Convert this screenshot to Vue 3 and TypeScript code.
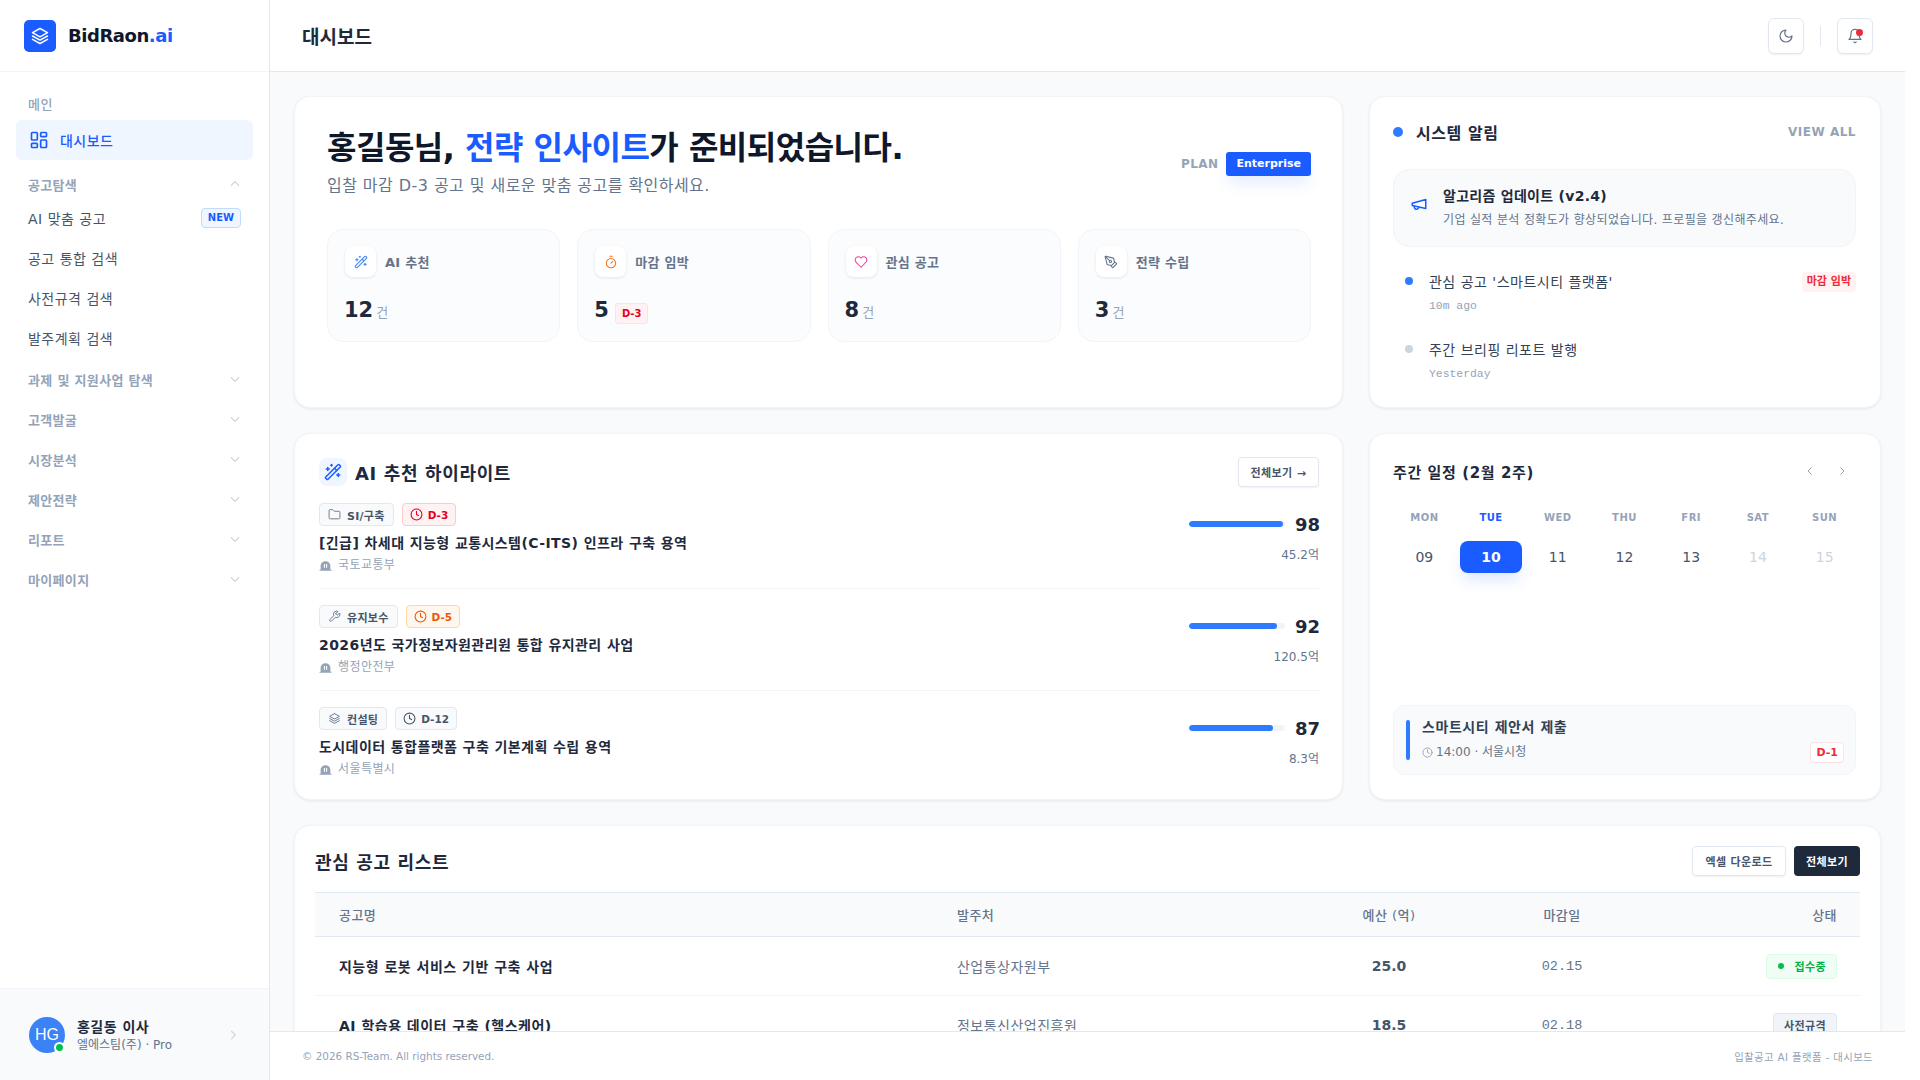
<script setup lang="ts">
const groups = ['과제 및 지원사업 탐색', '고객발굴', '시장분석', '제안전략', '리포트', '마이페이지']
const subs = ['공고 통합 검색', '사전규격 검색', '발주계획 검색']
const stats = [
  { key: 'wand', label: 'AI 추천', value: '12', color: '#3b82f6' },
  { key: 'clock', label: '마감 임박', value: '5', color: '#f97316', badge: 'D-3' },
  { key: 'heart', label: '관심 공고', value: '8', color: '#ec4899' },
  { key: 'pen', label: '전략 수립', value: '3', color: '#64748b' },
]
const recs = [
  { icon: 'folder', cat: 'SI/구축', d: 'D-3', tone: 'red', title: '[긴급] 차세대 지능형 교통시스템(C-ITS) 인프라 구축 용역', org: '국토교통부', score: 98, money: '45.2억' },
  { icon: 'wrench', cat: '유지보수', d: 'D-5', tone: 'orange', title: '2026년도 국가정보자원관리원 통합 유지관리 사업', org: '행정안전부', score: 92, money: '120.5억' },
  { icon: 'layers', cat: '컨설팅', d: 'D-12', tone: 'gray', title: '도시데이터 통합플랫폼 구축 기본계획 수립 용역', org: '서울특별시', score: 87, money: '8.3억' },
]
const days = [
  { n: 'MON', d: '09' }, { n: 'TUE', d: '10', on: true }, { n: 'WED', d: '11' }, { n: 'THU', d: '12' },
  { n: 'FRI', d: '13' }, { n: 'SAT', d: '14', off: true }, { n: 'SUN', d: '15', off: true },
]
</script>

<template>
  <div class="app">
    <aside class="side">
      <div class="brand">
        <span class="logo">
          <svg viewBox="0 0 24 24" width="20" height="20" fill="none" stroke="#fff" stroke-width="1.8" stroke-linejoin="round" stroke-linecap="round"><path d="M12 3 3 8l9 5 9-5-9-5Z"/><path d="m3 12 9 5 9-5"/><path d="m3 16 9 5 9-5"/></svg>
        </span>
        <span class="brand-name">BidRaon<em>.ai</em></span>
      </div>
      <nav class="nav">
        <div class="nav-label">메인</div>
        <a class="nav-active">
          <svg viewBox="0 0 24 24" width="20" height="20" fill="none" stroke="currentColor" stroke-width="2"><rect x="3" y="3" width="7" height="9" rx="1"/><rect x="14" y="3" width="7" height="5" rx="1"/><rect x="14" y="12" width="7" height="9" rx="1"/><rect x="3" y="16" width="7" height="5" rx="1"/></svg>
          <span>대시보드</span>
        </a>
        <div class="group open">
          <span>공고탐색</span>
          <svg viewBox="0 0 24 24" width="14" height="14" fill="none" stroke="#cbd5e1" stroke-width="2"><path d="m5 15 7-7 7 7"/></svg>
        </div>
        <div class="subs">
          <a class="sub"><span>AI 맞춤 공고</span><b class="new">NEW</b></a>
          <a v-for="s in subs" :key="s" class="sub"><span>{{ s }}</span></a>
        </div>
        <div v-for="g in groups" :key="g" class="group">
          <span>{{ g }}</span>
          <svg viewBox="0 0 24 24" width="14" height="14" fill="none" stroke="#cbd5e1" stroke-width="2"><path d="m5 9 7 7 7-7"/></svg>
        </div>
      </nav>
      <div class="user">
        <span class="avatar">HG<i></i></span>
        <span class="user-text"><b>홍길동 이사</b><small>엘에스팀(주) · Pro</small></span>
        <svg viewBox="0 0 24 24" width="14" height="14" fill="none" stroke="#cbd5e1" stroke-width="2"><path d="m9 5 7 7-7 7"/></svg>
      </div>
    </aside>

    <div class="main">
      <header class="top">
        <h1>대시보드</h1>
        <div class="top-actions">
          <button class="icon-btn">
            <svg viewBox="0 0 24 24" width="16" height="16" fill="none" stroke="#64748b" stroke-width="1.8" stroke-linecap="round" stroke-linejoin="round"><path d="M12 3a6 6 0 0 0 9 9 9 9 0 1 1-9-9Z"/></svg>
          </button>
          <span class="vline"></span>
          <button class="icon-btn">
            <svg viewBox="0 0 24 24" width="16" height="16" fill="none" stroke="#64748b" stroke-width="1.8" stroke-linecap="round" stroke-linejoin="round"><path d="M6 8a6 6 0 0 1 12 0c0 7 3 9 3 9H3s3-2 3-9"/><path d="M10.3 21a2 2 0 0 0 3.4 0"/></svg>
            <i class="bell-dot"></i>
          </button>
        </div>
      </header>

      <div class="content">
        <div class="grid">
          <section class="card hero">
            <div class="hero-top">
              <div>
                <h2>홍길동님, <em>전략 인사이트</em>가 준비되었습니다.</h2>
                <p>입찰 마감 D-3 공고 및 새로운 맞춤 공고를 확인하세요.</p>
              </div>
              <div class="plan"><span>PLAN</span><b>Enterprise</b></div>
            </div>
            <div class="stats">
              <div v-for="s in stats" :key="s.key" class="stat">
                <div class="stat-head">
                  <span class="stat-icon">
                    <svg viewBox="0 0 24 24" width="14" height="14" fill="none" :stroke="s.color" stroke-width="1.8" stroke-linecap="round" stroke-linejoin="round">
                      <template v-if="s.key === 'wand'"><path d="m21.64 3.64-1.28-1.28a1.21 1.21 0 0 0-1.72 0L2.360 18.640a1.21 1.21 0 0 0 0 1.720l1.280 1.280a1.200 1.200 0 0 0 1.720 0L21.640 5.360a1.200 1.200 0 0 0 0-1.720"/><path d="m14 7 3 3"/><path d="M5 6v4M19 14v4M10 2v2M7 8H3M21 16h-4M11 3H9"/></template>
                      <template v-else-if="s.key === 'clock'"><path d="M10 2h4"/><path d="m12 14 3-3"/><circle cx="12" cy="14" r="8"/></template>
                      <path v-else-if="s.key === 'heart'" d="M19 14c1.490-1.460 3-3.210 3-5.500A5.500 5.500 0 0 0 16.500 3c-1.760 0-3 .5-4.500 2-1.500-1.500-2.740-2-4.500-2A5.500 5.500 0 0 0 2 8.500c0 2.300 1.500 4.050 3 5.500l7 7Z"/>
                      <template v-else><path d="M15.707 21.293a1 1 0 0 1-1.414 0l-1.586-1.586a1 1 0 0 1 0-1.414l5.586-5.586a1 1 0 0 1 1.414 0l1.586 1.586a1 1 0 0 1 0 1.414z"/><path d="m18 13-1.375-6.874a1 1 0 0 0-.746-.776L3.235 2.028a1 1 0 0 0-1.207 1.207L5.350 15.879a1 1 0 0 0 .776.746L13 18"/><path d="m2.300 2.300 7.286 7.286"/><circle cx="11" cy="11" r="2"/></template>
                    </svg>
                  </span>
                  <span>{{ s.label }}</span>
                </div>
                <div class="stat-val">
                  <strong>{{ s.value }}</strong>
                  <b v-if="s.badge" class="d-badge">{{ s.badge }}</b>
                  <small v-else>건</small>
                </div>
              </div>
            </div>
          </section>

          <section class="card alerts">
            <div class="alerts-head">
              <h3><i class="blue-dot"></i>시스템 알림</h3>
              <a>VIEW ALL</a>
            </div>
            <div class="notice">
              <svg viewBox="0 0 24 24" width="18" height="18" fill="none" stroke="#1a5cff" stroke-width="2" stroke-linecap="round" stroke-linejoin="round"><path d="m3 11 18-5v12L3 14v-3z"/><path d="M11.600 16.800a3 3 0 1 1-5.800-1.600"/></svg>
              <div>
                <b>알고리즘 업데이트 (v2.4)</b>
                <p>기업 실적 분석 정확도가 향상되었습니다. 프로필을 갱신해주세요.</p>
              </div>
            </div>
            <div class="alert-row">
              <i class="adot"></i>
              <div class="alert-text"><span>관심 공고 '스마트시티 플랫폼'</span><code>10m ago</code></div>
              <b class="urgent">마감 임박</b>
            </div>
            <div class="alert-row">
              <i class="adot muted"></i>
              <div class="alert-text"><span>주간 브리핑 리포트 발행</span><code>Yesterday</code></div>
            </div>
          </section>

          <section class="card recs">
            <div class="recs-head">
              <h3>
                <span class="wand-box">
                  <svg viewBox="0 0 24 24" width="18" height="18" fill="none" stroke="#1a5cff" stroke-width="2" stroke-linecap="round" stroke-linejoin="round"><path d="m21.64 3.64-1.28-1.28a1.21 1.21 0 0 0-1.72 0L2.360 18.640a1.21 1.21 0 0 0 0 1.720l1.280 1.280a1.200 1.200 0 0 0 1.720 0L21.640 5.360a1.200 1.200 0 0 0 0-1.720"/><path d="m14 7 3 3"/><path d="M5 6v4M19 14v4M10 2v2M7 8H3M21 16h-4M11 3H9"/></svg>
                </span>
                AI 추천 하이라이트
              </h3>
              <button class="ghost">전체보기 →</button>
            </div>
            <div v-for="r in recs" :key="r.title" class="rec">
              <div class="rec-main">
                <div class="tags">
                  <span class="tag">
                    <svg viewBox="0 0 24 24" width="13" height="13" fill="none" stroke="#64748b" stroke-width="1.7" stroke-linecap="round" stroke-linejoin="round">
                      <path v-if="r.icon === 'folder'" d="M20 20a2 2 0 0 0 2-2V8a2 2 0 0 0-2-2h-7.900a2 2 0 0 1-1.690-.9L9.600 3.900A2 2 0 0 0 7.930 3H4a2 2 0 0 0-2 2v13a2 2 0 0 0 2 2Z"/>
                      <path v-else-if="r.icon === 'wrench'" d="M14.700 6.300a1 1 0 0 0 0 1.400l1.600 1.600a1 1 0 0 0 1.400 0l3.770-3.770a6 6 0 0 1-7.940 7.940l-6.910 6.910a2.120 2.120 0 0 1-3-3l6.910-6.910a6 6 0 0 1 7.940-7.940l-3.760 3.760z"/>
                      <template v-else><path d="M12 3 3 8l9 5 9-5-9-5Z"/><path d="m3 12 9 5 9-5"/><path d="m3 16 9 5 9-5"/></template>
                    </svg>
                    {{ r.cat }}
                  </span>
                  <span class="tag" :class="r.tone">
                    <svg viewBox="0 0 24 24" width="13" height="13" fill="none" stroke="currentColor" stroke-width="2" stroke-linecap="round" stroke-linejoin="round"><circle cx="12" cy="12" r="10"/><path d="M12 6v6l4 2"/></svg>
                    {{ r.d }}
                  </span>
                </div>
                <div class="rec-title">{{ r.title }}</div>
                <div class="rec-org">
                  <svg viewBox="0 0 24 24" width="13" height="13" fill="#94a3b8"><path d="M3 20v-8a9 8 0 0 1 18 0v8H3Zm6-11v7h2V9H9Zm4 0v7h2V9h-2ZM1 20h22v1.500H1Z" fill-rule="evenodd"/></svg>
                  {{ r.org }}
                </div>
              </div>
              <div class="rec-side">
                <div class="score">
                  <span class="bar"><i :style="{ width: r.score + '%' }"></i></span>
                  <b>{{ r.score }}</b>
                </div>
                <small>{{ r.money }}</small>
              </div>
            </div>
          </section>

          <section class="card cal">
            <div class="cal-head">
              <h3>주간 일정 (2월 2주)</h3>
              <div class="cal-nav">
                <svg viewBox="0 0 24 24" width="12" height="12" fill="none" stroke="#94a3b8" stroke-width="2"><path d="m15 5-7 7 7 7"/></svg>
                <svg viewBox="0 0 24 24" width="12" height="12" fill="none" stroke="#94a3b8" stroke-width="2"><path d="m9 5 7 7-7 7"/></svg>
              </div>
            </div>
            <div class="week">
              <div v-for="d in days" :key="d.n" class="day" :class="{ on: d.on, off: d.off }">
                <span class="dn">{{ d.n }}</span>
                <span class="dd">{{ d.d }}</span>
              </div>
            </div>
            <div class="event">
              <i class="ebar"></i>
              <div class="etext">
                <b>스마트시티 제안서 제출</b>
                <span>
                  <svg viewBox="0 0 24 24" width="11" height="11" fill="none" stroke="#94a3b8" stroke-width="2" stroke-linecap="round"><circle cx="12" cy="12" r="10"/><path d="M12 6v6l4 2"/></svg>
                  14:00 · 서울시청
                </span>
              </div>
              <b class="d1">D-1</b>
            </div>
          </section>
        </div>

        <section class="card list">
          <div class="list-head">
            <h3>관심 공고 리스트</h3>
            <div class="list-btns">
              <button class="ghost wide">엑셀 다운로드</button>
              <button class="dark">전체보기</button>
            </div>
          </div>
          <table>
            <thead>
              <tr><th class="c1">공고명</th><th class="c2">발주처</th><th class="c3">예산 (억)</th><th class="c4">마감일</th><th class="c5">상태</th></tr>
            </thead>
            <tbody>
              <tr>
                <td class="tname">지능형 로봇 서비스 기반 구축 사업</td><td class="torg">산업통상자원부</td><td class="tnum">25.0</td><td class="tdate">02.15</td>
                <td class="tstat"><span class="st green"><i></i>접수중</span></td>
              </tr>
              <tr>
                <td class="tname">AI 학습용 데이터 구축 (헬스케어)</td><td class="torg">정보통신산업진흥원</td><td class="tnum">18.5</td><td class="tdate">02.18</td>
                <td class="tstat"><span class="st gray">사전규격</span></td>
              </tr>
            </tbody>
          </table>
        </section>
      </div>

      <footer class="foot">
        <span class="foot-copy">© 2026 RS-Team. All rights reserved.</span>
        <span>입찰공고 AI 플랫폼 - 대시보드</span>
      </footer>
    </div>
    <div class="gutter"></div>
  </div>
</template>

<style>
html, body { margin: 0; overflow: hidden; }
</style>

<style scoped>
.app { display: flex; height: 1080px; background: #f8fafc; font-family: "DejaVu Sans", "Noto Sans CJK KR", sans-serif; color: #1e293b; overflow: hidden; }
.app * { letter-spacing: .035em; }
h1, h2, h3, p { margin: 0; }
em { font-style: normal; }
i { display: block; font-style: normal; }
button { font-family: inherit; cursor: pointer; }
.gutter { width: 15px; flex: none; background: #fff; }

.side { width: 270px; flex: none; box-sizing: border-box; background: #fff; border-right: 1px solid #e2e8f0; display: flex; flex-direction: column; }
.brand { height: 72px; box-sizing: border-box; flex: none; display: flex; align-items: center; gap: 12px; padding: 0 24px; border-bottom: 1px solid #f1f5f9; }
.logo { width: 32px; height: 32px; border-radius: 5px; background: #1a5cff; display: flex; align-items: center; justify-content: center; }
.brand-name { font-size: 18px; font-weight: 700; color: #0f172a; letter-spacing: -0.45px; }
.brand-name em { color: #1a5cff; letter-spacing: inherit; }
.nav { flex: 1; padding: 21px 16px 0; }
.nav-label { font-size: 13px; color: #94a3b8; padding: 0 12px; height: 24px; line-height: 24px; margin-bottom: 3px; font-weight: 500; }
.nav-active { height: 40px; border-radius: 6px; background: #eff6ff; color: #1a5cff; display: flex; align-items: center; gap: 11px; padding: 0 12px 0 13px; font-size: 14px; font-weight: 500; }
.group { height: 40px; display: flex; align-items: center; justify-content: space-between; padding: 0 11px 0 12px; font-size: 13px; font-weight: 600; color: #94a3b8; }
.group.open { margin-top: 4px; }
.group span { letter-spacing: .025em; }
.subs { margin-top: -6px; margin-bottom: 1px; }
.sub { height: 40px; display: flex; align-items: center; justify-content: space-between; padding: 0 12px; font-size: 14px; color: #475569; }
.new { font-size: 10px; font-weight: 700; color: #1a5cff; background: #eff6ff; border: 1px solid #bfdbfe; border-radius: 4px; padding: 2px 6px; line-height: 14px; letter-spacing: 0; }
.user { height: 92px; box-sizing: border-box; flex: none; display: flex; align-items: center; gap: 12px; padding: 0 29px; border-top: 1px solid #f1f5f9; background: #f8fafc; }
.avatar { position: relative; width: 36px; height: 36px; flex: none; border-radius: 50%; background: #3b82f6; color: #fff; font-family: "Liberation Sans", sans-serif; font-size: 16px; letter-spacing: 0; display: flex; align-items: center; justify-content: center; }
.avatar i { position: absolute; right: 0; bottom: 0; width: 7px; height: 7px; border-radius: 50%; background: #00c04b; border: 2px solid #fff; }
.user-text { flex: 1; display: flex; flex-direction: column; gap: 1px; padding-top: 2px; }
.user-text b { font-size: 14px; font-weight: 600; color: #1e293b; line-height: 18px; }
.user-text small { font-size: 12px; color: #64748b; line-height: 16px; letter-spacing: 0; }

.main { flex: 1; min-width: 0; display: flex; flex-direction: column; height: 1080px; }
.top { height: 72px; box-sizing: border-box; flex: none; background: #fff; border-bottom: 1px solid #e2e8f0; display: flex; align-items: center; justify-content: space-between; padding: 0 32px; }
.top h1 { font-size: 19px; font-weight: 600; color: #1e293b; letter-spacing: 0; padding-bottom: 1px; }
.top-actions { display: flex; align-items: center; gap: 16px; }
.icon-btn { position: relative; width: 36px; height: 36px; padding: 0; border: 1px solid #e2e8f0; border-radius: 6px; background: #fff; display: flex; align-items: center; justify-content: center; box-shadow: 0 1px 2px rgba(15, 23, 42, .06); }
.vline { width: 1px; height: 20px; background: #e2e8f0; }
.bell-dot { position: absolute; top: 10px; right: 9px; width: 7px; height: 7px; border-radius: 50%; background: #ef2b3a; }

.content { flex: 1; min-height: 0; overflow: hidden; padding: 24px 24px 0; }
.grid { display: grid; grid-template-columns: 1049px 512px; column-gap: 26px; row-gap: 25px; grid-template-rows: 312px 367px; }
.card { box-sizing: border-box; background: #fff; border: 1px solid #f1f5f9; border-radius: 16px; box-shadow: 0 1px 3px rgba(15, 23, 42, .08); }

.hero { padding: 24px 31px 0 32px; }
.hero-top { display: flex; align-items: center; justify-content: space-between; height: 84px; margin-bottom: 24px; }
.hero h2 { font-size: 32px; font-weight: 700; color: #0f172a; line-height: 40px; letter-spacing: -0.5px; }
.hero h2 em { color: #1a5cff; letter-spacing: inherit; }
.hero p { margin-top: 6px; font-size: 16px; color: #64748b; line-height: 24px; letter-spacing: .028em; }
.plan { display: flex; align-items: center; gap: 8px; margin-top: 2px; }
.plan span { font-size: 12px; font-weight: 700; color: #94a3b8; letter-spacing: .4px; }
.plan b { font-size: 11px; font-weight: 700; color: #fff; background: #1a5cff; border-radius: 3px; padding: 0 10px; height: 24px; line-height: 24px; letter-spacing: 0; box-shadow: 0 10px 15px -3px rgba(26, 92, 255, .12); }
.stats { display: grid; grid-template-columns: repeat(4, 1fr); gap: 17px; }
.stat { box-sizing: border-box; height: 113px; background: #fbfcfe; border: 1px solid #f1f5f9; border-radius: 16px; padding: 16px 17px 17px; }
.stat-head { display: flex; align-items: center; gap: 9px; font-size: 13px; font-weight: 600; color: #64748b; }
.stat-head span { letter-spacing: .02em; }
.stat-icon { width: 31px; height: 31px; background: #fff; border-radius: 8px; box-shadow: 0 1px 3px rgba(15, 23, 42, .1); display: flex; align-items: center; justify-content: center; }
.stat-val { display: flex; align-items: baseline; gap: 3px; margin-top: 17px; }
.stat-val strong { font-size: 21px; font-weight: 700; color: #1e293b; line-height: 32px; letter-spacing: 0; margin-left: -1px; }
.stat-val small { font-size: 13px; color: #94a3b8; }
.d-badge { font-size: 10px; font-weight: 700; color: #e60023; background: #fef2f2; border: 1px solid #fee2e2; border-radius: 3px; padding: 0 6px; height: 19px; line-height: 19px; margin-left: 3px; letter-spacing: 0; }

.alerts { padding: 24px 24px 24px 23px; }
.alerts-head { display: flex; align-items: center; justify-content: space-between; height: 24px; margin-bottom: 25px; margin-top: -1px; }
.alerts-head h3 { font-size: 16px; font-weight: 600; color: #1e293b; display: flex; align-items: center; gap: 13px; }
.blue-dot { width: 10px; height: 10px; border-radius: 50%; background: #2f7bff; }
.alerts-head a { font-size: 12px; font-weight: 700; color: #94a3b8; letter-spacing: .5px; }
.notice { box-sizing: border-box; height: 78px; background: #f8fafc; border: 1px solid #f1f5f9; border-radius: 16px; padding: 0 16px; display: flex; align-items: center; gap: 15px; }
.notice svg { flex: none; margin-top: -8px; }
.notice b { display: block; font-size: 14px; font-weight: 600; color: #1e293b; line-height: 20px; letter-spacing: .02em; }
.notice p { margin-top: 4px; font-size: 12px; color: #64748b; line-height: 20px; letter-spacing: .03em; }
.alert-row { display: flex; align-items: flex-start; margin-top: 24px; padding-left: 12px; height: 44px; }
.adot { width: 8px; height: 8px; flex: none; border-radius: 50%; background: #2f7bff; margin: 6px 16px 0 0; }
.adot.muted { background: #cbd5e1; }
.alert-text { flex: 1; display: flex; flex-direction: column; gap: 4px; padding-top: 1px; }
.alert-text span { font-size: 14px; color: #334155; line-height: 20px; }
.alert-text code { font-family: "Liberation Mono", monospace; font-size: 11.4px; color: #94a3b8; line-height: 20px; letter-spacing: 0; }
.urgent { font-size: 11px; font-weight: 700; color: #ef2b3a; background: #fef2f2; border-radius: 4px; padding: 0 5px; height: 20px; line-height: 20px; margin-top: 1px; letter-spacing: 0; }

.recs { padding: 24px 23px 24px 24px; }
.recs-head { display: flex; align-items: center; justify-content: space-between; height: 30px; margin-bottom: 16px; margin-top: -1px; }
.recs-head h3 { font-size: 18px; font-weight: 600; color: #1e293b; display: flex; align-items: center; gap: 8px; }
.wand-box { width: 28px; height: 28px; border-radius: 8px; background: #eff6ff; display: flex; align-items: center; justify-content: center; }
.ghost { width: 81px; height: 30px; padding: 0; background: #fff; border: 1px solid #e2e8f0; border-radius: 4px; font-size: 11px; font-weight: 600; color: #475569; box-shadow: 0 1px 2px rgba(15, 23, 42, .06); }
.ghost.wide { width: 94px; }
.rec { display: flex; justify-content: space-between; padding: 16px 0 13px; border-bottom: 1px solid #f1f5f9; }
.recs-head + .rec { padding-top: 0; }
.rec:last-child { border-bottom: 0; }
.tags { display: flex; gap: 8px; }
.tag { box-sizing: border-box; height: 23px; display: flex; align-items: center; gap: 6px; padding: 0 8px; background: #f8fafc; border: 1px solid #e2e8f0; border-radius: 4px; font-size: 11px; font-weight: 600; color: #475569; letter-spacing: .025em; }
.tag.red, .tag.orange, .tag.gray { letter-spacing: 0; padding: 0 7px; gap: 5px; font-size: 10.5px; }
.tag.red { color: #e60023; background: #fef2f2; border-color: #fecaca; }
.tag.orange { color: #ea580c; background: #fff7ed; border-color: #fed7aa; }
.rec-title { margin-top: 7px; font-size: 14px; font-weight: 600; color: #1e293b; line-height: 20px; letter-spacing: .03em; }
.rec-org { margin-top: 2px; display: flex; align-items: center; gap: 6px; font-size: 12px; color: #94a3b8; line-height: 20px; }
.rec-side { display: flex; flex-direction: column; align-items: flex-end; }
.score { display: flex; align-items: center; gap: 10px; margin-top: 7px; height: 28px; }
.bar { display: block; width: 96px; height: 6px; border-radius: 3px; background: #f1f5f9; overflow: hidden; }
.bar i { height: 100%; border-radius: 3px; background: #2f7bff; }
.score b { font-size: 18px; font-weight: 700; color: #1e293b; width: 24px; text-align: right; letter-spacing: 0; }
.rec-side small { margin-top: 7px; font-size: 12px; color: #64748b; line-height: 20px; letter-spacing: 0; }

.cal { padding: 24px 24px 24px 23px; display: flex; flex-direction: column; }
.cal-head { display: flex; justify-content: space-between; align-items: center; height: 26px; margin-bottom: 22px; }
.cal-head h3 { font-size: 15px; font-weight: 600; color: #1e293b; letter-spacing: .04em; }
.cal-nav { display: flex; gap: 20px; padding-right: 8px; }
.week { display: grid; grid-template-columns: repeat(7, 1fr); gap: 4px; }
.day { display: flex; flex-direction: column; align-items: center; gap: 11px; }
.dn { font-size: 10px; font-weight: 600; color: #94a3b8; letter-spacing: .5px; line-height: 24px; height: 24px; }
.dd { width: 100%; height: 32px; line-height: 32px; text-align: center; font-size: 14px; color: #475569; border-radius: 8px; letter-spacing: 0; }
.day.on .dn { color: #1a5cff; font-weight: 700; }
.day.on .dd { background: #1a5cff; color: #fff; font-weight: 700; box-shadow: 0 10px 15px -3px rgba(26, 92, 255, .15); }
.day.off .dd { color: #cbd5e1; }
.event { box-sizing: border-box; height: 70px; margin-top: auto; background: #f8fafc; border: 1px solid #f1f5f9; border-radius: 12px; display: flex; align-items: center; padding: 0 11px 0 12px; }
.ebar { width: 4px; height: 40px; border-radius: 2px; background: #2f7bff; flex: none; }
.etext { flex: 1; margin-left: 12px; display: flex; flex-direction: column; gap: 6px; margin-top: -2px; }
.etext b { font-size: 14px; font-weight: 600; color: #334155; line-height: 20px; letter-spacing: .04em; }
.etext span { display: flex; align-items: center; gap: 3px; font-size: 12px; color: #64748b; line-height: 18px; letter-spacing: 0; }
.d1 { box-sizing: border-box; align-self: flex-end; margin-bottom: 11px; font-size: 11px; font-weight: 700; color: #ef2b3a; background: #fff; border: 1px solid #fee2e2; border-radius: 4px; padding: 0 5px; height: 21px; line-height: 19px; letter-spacing: 0; }

.list { margin-top: 25px; padding: 20px 20px 0; }
.list-head { display: flex; align-items: center; justify-content: space-between; height: 30px; margin-bottom: 16px; }
.list-head h3 { font-size: 18px; font-weight: 600; color: #1e293b; }
.list-btns { display: flex; gap: 8px; }
.dark { width: 66px; height: 30px; padding: 0; background: #1e293b; border: 0; border-radius: 4px; color: #fff; font-size: 11px; font-weight: 600; }
table { width: 100%; border-collapse: collapse; table-layout: fixed; }
th { height: 43px; padding: 0; font-size: 13px; font-weight: 500; color: #64748b; background: #f8fafc; border-top: 1px solid #e2e8f0; border-bottom: 1px solid #e2e8f0; }
td { height: 58px; padding: 0; border-bottom: 1px solid #f1f5f9; }
.c1 { width: 642px; text-align: left; padding-left: 24px; box-sizing: border-box; }
.c2 { width: 372px; text-align: left; }
.c3 { width: 120px; text-align: center; }
.c4 { width: 226px; text-align: center; }
.c5 { text-align: right; padding-right: 23px; }
.tname { padding-left: 24px; font-size: 14px; font-weight: 600; color: #1e293b; }
.torg { font-size: 14px; color: #64748b; }
.tnum { text-align: center; font-size: 14px; font-weight: 700; color: #475569; letter-spacing: 0; }
.tdate { text-align: center; font-family: "Liberation Mono", monospace; font-size: 13.5px; color: #64748b; letter-spacing: 0; }
.tstat { text-align: right; padding-right: 23px; }
.st { display: inline-flex; align-items: center; box-sizing: border-box; height: 25px; padding: 0 10px; border-radius: 4px; font-size: 11px; font-weight: 600; border: 1px solid; }
.st.green { color: #00b347; background: #f0fdf4; border-color: #dcfce7; gap: 10px; padding-left: 11px; }
.st.green i { width: 6px; height: 6px; border-radius: 50%; background: #00c04b; }
.st.gray { color: #475569; background: #f1f5f9; border-color: #e2e8f0; }

.foot { height: 49px; box-sizing: border-box; flex: none; background: #fff; border-top: 1px solid #e2e8f0; display: flex; align-items: center; justify-content: space-between; padding: 0 32px; font-size: 10.4px; color: #94a3b8; }
.foot-copy { letter-spacing: 0; }
</style>
